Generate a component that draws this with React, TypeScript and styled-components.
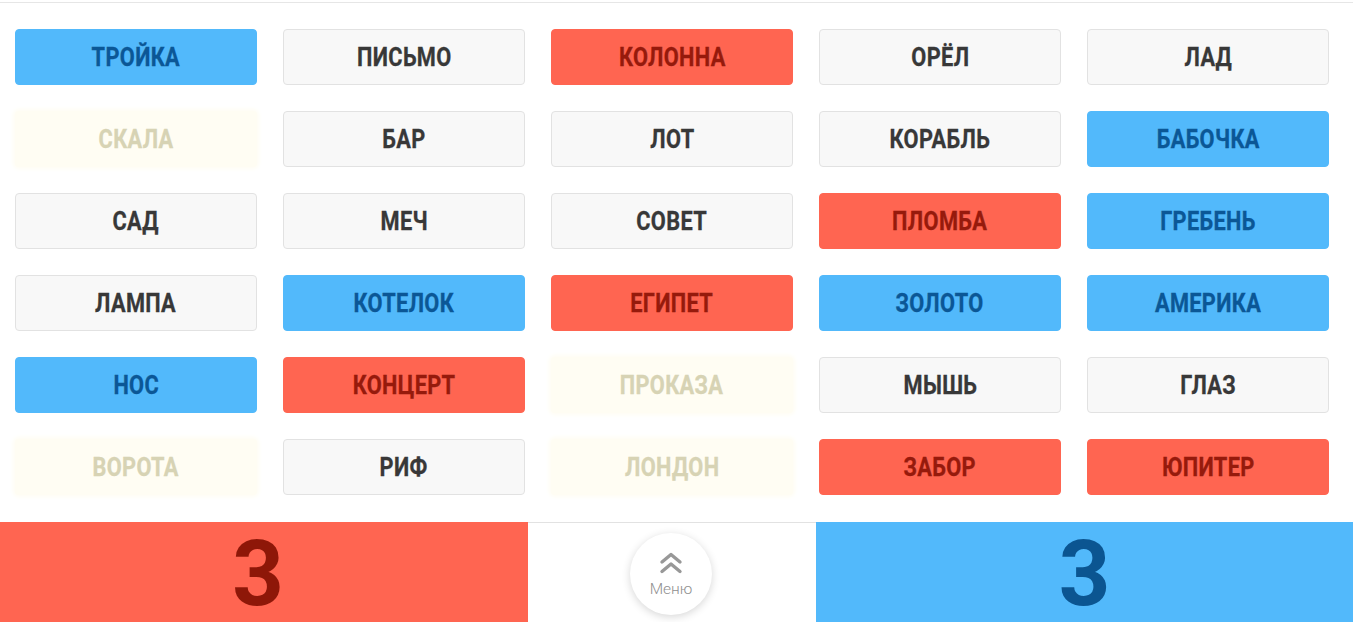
import React from "react";
import styled, { createGlobalStyle } from "styled-components";

const Global = createGlobalStyle`
  html, body { margin: 0; padding: 0; background: #ffffff; }
  body { font-family: Roboto, "Noto Sans", sans-serif; overflow: hidden; }
`;

type Kind = "blue" | "red" | "plain" | "faded";

const palette: Record<Kind, { bg: string; fg: string; border: string; shadow: string }> = {
  blue: { bg: "#52b9fb", fg: "#0b5796", border: "#52b9fb", shadow: "none" },
  red: { bg: "#ff6551", fg: "#961a0c", border: "#ff6551", shadow: "none" },
  plain: { bg: "#f8f8f8", fg: "#383838", border: "#e2e2e2", shadow: "none" },
  faded: { bg: "#fffdf3", fg: "#d7d3b4", border: "#fffdf3", shadow: "0 0 4px 2px #fffdf3" },
};

const Page = styled.div`
  width: 1353px;
  height: 622px;
  display: flex;
  flex-direction: column;
`;

const Board = styled.div`
  margin-top: 2px;
  border-top: 1px solid #e6e6e6;
  padding: 26px 24px 27px 15px;
  display: grid;
  grid-template-columns: repeat(5, 242px);
  grid-auto-rows: 56px;
  column-gap: 26px;
  row-gap: 26px;
`;

const Card = styled.div<{ $kind: Kind }>`
  box-sizing: border-box;
  border-radius: 4px;
  background: ${(p) => palette[p.$kind].bg};
  border: 1px solid ${(p) => palette[p.$kind].border};
  box-shadow: ${(p) => palette[p.$kind].shadow};
  color: ${(p) => palette[p.$kind].fg};
  display: flex;
  align-items: center;
  justify-content: center;
`;

const Word = styled.span`
  display: inline-block;
  font-family: Roboto, sans-serif;
  font-weight: 700;
  font-size: 25px;
  letter-spacing: 0.4px;
  transform: scaleX(0.87);
  white-space: nowrap;
  -webkit-text-stroke: 0.3px currentColor;
`;

const Footer = styled.div`
  display: flex;
  height: 100px;
`;

const Score = styled.div<{ $team: "red" | "blue"; $w: number; $shift: number }>`
  width: ${(p) => p.$w}px;
  background: ${(p) => (p.$team === "red" ? "#ff6551" : "#52b9fb")};
  color: ${(p) => (p.$team === "red" ? "#8e1708" : "#0b5591")};
  display: flex;
  align-items: center;
  justify-content: center;
  font-family: Roboto, sans-serif;
  font-weight: 700;
  font-size: 90px;
  line-height: 90px;
  padding-top: 6px;
  padding-right: ${(p) => p.$shift}px;
  box-sizing: border-box;
`;

const Middle = styled.div`
  width: 288px;
  border-top: 1px solid #e2e2e2;
  box-sizing: border-box;
  display: flex;
  justify-content: center;
  align-items: flex-start;
  padding-top: 10px;
`;

const MenuButton = styled.div`
  width: 82px;
  height: 82px;
  border-radius: 50%;
  background: #ffffff;
  box-shadow: 0 2px 8px rgba(0, 0, 0, 0.16);
  display: flex;
  flex-direction: column;
  align-items: center;
  justify-content: center;
  color: #9a9a9a;
  margin-left: -2px;
  padding-top: 2px;
  box-sizing: border-box;
`;

const MenuLabel = styled.span`
  font-family: Roboto, sans-serif;
  font-weight: 300;
  font-size: 15.5px;
  margin-top: 6px;
  color: #8f8f8f;
`;

const words: [string, Kind][] = [
  ["ТРОЙКА", "blue"], ["ПИСЬМО", "plain"], ["КОЛОННА", "red"], ["ОРЁЛ", "plain"], ["ЛАД", "plain"],
  ["СКАЛА", "faded"], ["БАР", "plain"], ["ЛОТ", "plain"], ["КОРАБЛЬ", "plain"], ["БАБОЧКА", "blue"],
  ["САД", "plain"], ["МЕЧ", "plain"], ["СОВЕТ", "plain"], ["ПЛОМБА", "red"], ["ГРЕБЕНЬ", "blue"],
  ["ЛАМПА", "plain"], ["КОТЕЛОК", "blue"], ["ЕГИПЕТ", "red"], ["ЗОЛОТО", "blue"], ["АМЕРИКА", "blue"],
  ["НОС", "blue"], ["КОНЦЕРТ", "red"], ["ПРОКАЗА", "faded"], ["МЫШЬ", "plain"], ["ГЛАЗ", "plain"],
  ["ВОРОТА", "faded"], ["РИФ", "plain"], ["ЛОНДОН", "faded"], ["ЗАБОР", "red"], ["ЮПИТЕР", "red"],
];

const Chevrons = () => (
  <svg width="24" height="22" viewBox="0 0 24 22" fill="none" stroke="#989898" strokeWidth="3.4" strokeLinecap="round" strokeLinejoin="round">
    <polyline points="3,10 12,2.5 21,10" />
    <polyline points="3,19.5 12,12 21,19.5" />
  </svg>
);

export default function App() {
  return (
    <Page>
      <Global />
      <Board>
        {words.map(([w, k]) => (
          <Card key={w} $kind={k}>
            <Word>{w}</Word>
          </Card>
        ))}
      </Board>
      <Footer>
        <Score $team="red" $w={528} $shift={12}>3</Score>
        <Middle>
          <MenuButton>
            <Chevrons />
            <MenuLabel>Меню</MenuLabel>
          </MenuButton>
        </Middle>
        <Score $team="blue" $w={537} $shift={0}>3</Score>
      </Footer>
    </Page>
  );
}
